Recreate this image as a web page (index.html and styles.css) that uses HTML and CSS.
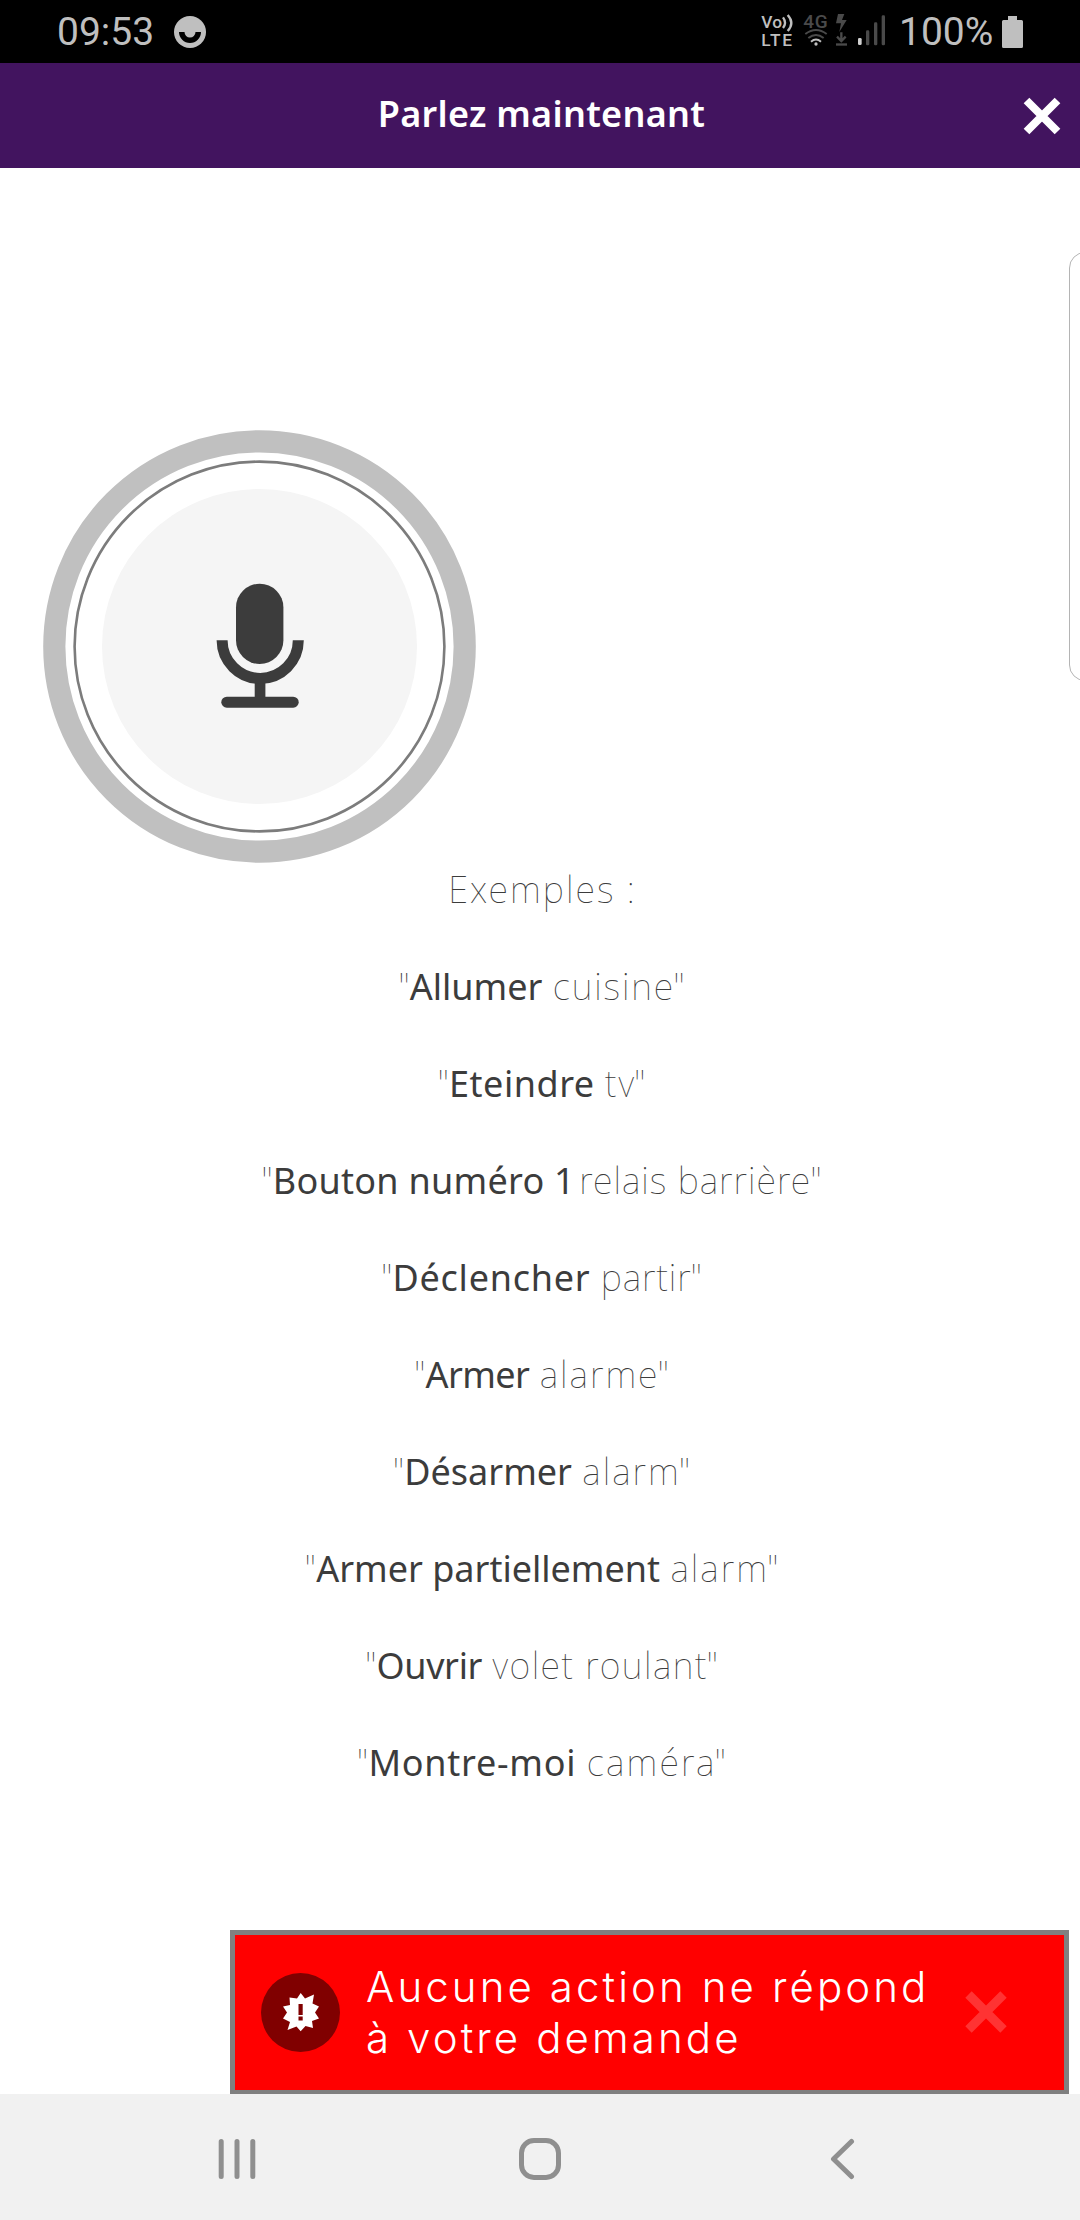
FILE: index.html
```html
<!DOCTYPE html>
<html lang="fr">
<head>
<meta charset="utf-8">
<title>Parlez maintenant</title>
<link rel="stylesheet" href="styles.css">
</head>
<body>
<div class="phone">
  <div class="status">
    <span class="clock">09:53</span>
    <svg class="smiley" viewBox="0 0 32 32">
      <circle cx="16" cy="16" r="16" fill="#bfbfbf"/>
      <path d="M5 16H10.5A5.5 5.5 0 0 0 21.500 16H27A11 11 0 0 1 5 16Z" fill="#000"/>
    </svg>
    <svg class="signals" viewBox="60 0 390 189">
      <g fill="#bfbfbf" font-family="Roboto, sans-serif" font-weight="500" font-size="52">
        <text x="64" y="84" textLength="62">Vo</text>
        <text x="64" y="138" textLength="92">LTE</text>
      </g>
      <g fill="none" stroke="#bfbfbf" stroke-width="7">
        <path d="M129 52Q141 68 129 84M143 45Q165 69 143 93"/>
      </g>
      <text x="190" y="84" textLength="73" fill="#4a4a4a" font-family="Roboto, sans-serif" font-weight="500" font-size="57">4G</text>
      <g fill="none" stroke-width="6">
        <path d="M196 102Q228 78 260 102M205 114Q228 96 251 114" stroke="#4a4a4a"/>
        <path d="M213 125Q228 112 243 125" stroke="#bfbfbf"/>
      </g>
      <circle cx="228" cy="132" r="5" fill="#bfbfbf"/>
      <g fill="#4a4a4a">
        <path d="M294 42H313L306 60H320L298 96L303 70H288Z"/>
        <rect x="288" y="130" width="33" height="7"/>
        <rect x="354" y="114" width="11" height="21" rx="4" fill="#d0d0d0"/>
        <rect x="378" y="91" width="10" height="45" rx="4"/>
        <rect x="402" y="67" width="10" height="69" rx="4"/>
        <rect x="425" y="46" width="10" height="90" rx="4"/>
      </g>
      <path d="M304 97V123M291 110L304 123L317 110" fill="none" stroke="#4a4a4a" stroke-width="7"/>
    </svg>
    <span class="percent">100%</span>
    <svg class="battery" viewBox="0 0 21 32">
      <path d="M6 0H15V4H19.500Q21 4 21 5.500V30.500Q21 32 19.500 32H1.500Q0 32 0 30.500V5.500Q0 4 1.500 4H6Z" fill="#bfbfbf"/>
    </svg>
  </div>

  <header class="header">
    <h1 class="title">Parlez maintenant</h1>
    <svg class="close" viewBox="0 0 38 38"><path d="M3.500 3.500L34.500 34.500M34.500 3.500L3.500 34.500" stroke="#fff" stroke-width="8"/></svg>
  </header>

  <main class="content">
    <svg class="mic" viewBox="43 430 433 433">
      <circle cx="259.500" cy="646.500" r="205.200" fill="#fff" stroke="#c0c0c0" stroke-width="22.200"/>
      <circle cx="259.500" cy="646.500" r="184.900" fill="none" stroke="#7c7c7c" stroke-width="2.600"/>
      <circle cx="259.500" cy="646.500" r="157.500" fill="#f5f5f5"/>
      <g fill="#3c3c3c">
        <rect x="236" y="583.700" width="47.400" height="80.300" rx="23.700"/>
        <rect x="254.700" y="680" width="10.700" height="20"/>
        <rect x="221.300" y="696.700" width="77.400" height="11" rx="5.500"/>
      </g>
      <path d="M222.100 640.300A38 38 0 0 0 298.300 640.300" fill="none" stroke="#3c3c3c" stroke-width="11"/>
    </svg>

    <div class="examples">
      <p class="row intro">Exemples :</p>
      <p class="row">"<b class="v1">Allumer</b> <span class="w1">cuisine</span>"</p>
      <p class="row">"<b class="v2">Eteindre</b> <span class="w2">tv</span>"</p>
      <p class="row">"<b class="v3">Bouton numéro 1</b> <span class="w3">relais barrière</span>"</p>
      <p class="row">"<b class="v4">Déclencher</b> <span class="w4">partir</span>"</p>
      <p class="row">"<b class="v5">Armer</b> <span class="w5">alarme</span>"</p>
      <p class="row">"<b class="v6">Désarmer</b> <span class="w6">alarm</span>"</p>
      <p class="row">"<b class="v7">Armer partiellement</b> <span class="w6">alarm</span>"</p>
      <p class="row">"<b class="v8">Ouvrir</b> <span class="w8">volet roulant</span>"</p>
      <p class="row">"<b class="v9">Montre-moi</b> <span class="w9">caméra</span>"</p>
    </div>

    <div class="toast">
      <svg class="alert" viewBox="0 0 79 79">
        <circle cx="39.500" cy="39.500" r="39.500" fill="#800000"/>
        <path d="M39.700 20L44 25.500L53 21.500L51.500 30.500L58 33.500L54 39.500L58 45.500L51 48L52 55L44.500 53L39.700 58.300L35.500 53.500L26.500 57L29 49L22 45.500L26 39.500L22 33.500L29 32L28.500 24.500L36 25.500Z" fill="#fff"/>
        <path d="M37.500 31H41.700V42H37.500ZM37.500 43.500H41.700V47.500H37.500Z" fill="#800000"/>
      </svg>
      <p class="message">Aucune action ne répond<br>à votre demande</p>
      <svg class="dismiss" viewBox="0 0 42 42"><path d="M3.500 3.500L38.500 38.500M38.500 3.500L3.500 38.500" stroke="#f33" stroke-width="9"/></svg>
    </div>
    <div class="drawer"></div>
  </main>

  <nav class="nav">
    <svg class="key" viewBox="0 0 42 42"><path d="M4.200 3.500V38.500M20 3.500V38.500M35.800 3.500V38.500"/></svg>
    <svg class="key" viewBox="0 0 42 42"><rect x="2.500" y="2.500" width="37" height="37" rx="12.500"/></svg>
    <svg class="key" viewBox="0 0 42 42"><path d="M30.500 3.500L12.500 21L30.500 38.500"/></svg>
  </nav>
</div>
</body>
</html>
```
FILE: styles.css
```css
* { box-sizing: border-box; }

body {
  margin: 0;
  background: #000;
  font-family: "Noto Sans", "Open Sans", sans-serif;
}

.phone {
  display: flex;
  flex-direction: column;
  width: 1080px;
  height: 2220px;
  overflow: hidden;
  background: #fff;
}

/* Status bar */
.status {
  display: flex;
  align-items: center;
  height: 63px;
  padding: 0 57px;
  background: #000;
  color: #bfbfbf;
  font-family: Roboto, sans-serif;
  font-size: 39px;
  line-height: 63px;
}
.clock { width: 117px; padding-top: 2px; }
.smiley { width: 32px; height: 32px; }
.signals { width: 130px; height: 63px; margin-left: auto; }
.percent { width: 103px; margin-left: 9px; padding-top: 2px; }
.battery { width: 21px; height: 32px; }

/* Title bar */
.header {
  display: grid;
  grid-template-columns: 62px 1fr 62px;
  align-items: center;
  height: 105px;
  background: #42145f;
}
.title {
  grid-column: 2;
  margin: 0 0 5px 3px;
  color: #fff;
  font-size: 36px;
  font-weight: 600;
  letter-spacing: 0.28px;
  text-align: center;
}
.close { width: 38px; height: 38px; margin-left: 5px; }

/* Voice panel */
.content {
  position: relative;
  flex: 1;
  display: flex;
  flex-direction: column;
  padding-top: 262px;
}
.mic { flex: none; width: 433px; height: 433px; margin-left: 43px; }

.examples {
  display: flex;
  flex-direction: column;
  gap: 43px;
  padding-left: 3px;
  color: #3c3c3c;
  font-size: 36px;
  font-weight: 100;
  line-height: 54px;
  text-align: center;
}
.row { margin: 0; white-space: nowrap; word-spacing: 1px; }
.row b { font-weight: 450; word-spacing: 0; }
.row span { word-spacing: 0; }
.intro { padding-left: 2px; letter-spacing: 2.06px; word-spacing: 0; }
.v2 { letter-spacing: 0.52px; }
.v3 { letter-spacing: 0.26px; margin-right: -6px; }
.v4 { letter-spacing: 0.76px; }
.v5 { letter-spacing: -0.58px; }
.v8 { letter-spacing: -0.36px; }
.v9 { letter-spacing: 0.75px; }
.w1 { letter-spacing: 1.9px; margin-right: -2px; }
.w2 { letter-spacing: 2px; margin-right: -2px; }
.w3 { letter-spacing: 1px; margin-right: -1px; }
.w4 { letter-spacing: 0.9px; margin-right: -1px; }
.w5 { letter-spacing: 2px; margin-right: -2px; }
.w6 { letter-spacing: 2px; margin-right: -2px; }
.w8 { letter-spacing: 1.5px; margin-right: -1.5px; }
.w9 { letter-spacing: 2.2px; margin-right: -2px; }

/* Error toast */
.toast {
  display: flex;
  align-items: center;
  width: 839px;
  height: 164px;
  margin: auto 0 0 230px;
  padding-left: 26px;
  background: #f00;
  border: solid #808080;
  border-width: 5px 5px 4px;
}
.alert { flex: none; width: 79px; height: 79px; }
.message {
  flex: none;
  width: 599px;
  margin: 0 0 2px 26px;
  color: #fff;
  font-family: Inter, "Noto Sans", sans-serif;
  font-size: 42px;
  font-weight: 300;
  line-height: 51px;
  letter-spacing: 3.1px;
  white-space: nowrap;
}
.dismiss { flex: none; width: 42px; height: 42px; margin-top: -1px; }

/* Edge panel peeking in from the right */
.drawer {
  position: absolute;
  top: 84px;
  right: -30px;
  width: 41px;
  height: 429px;
  border: 1px solid #b4b4b4;
  border-radius: 16px;
  background: #fff;
}

/* Navigation keys */
.nav {
  display: flex;
  justify-content: center;
  align-items: center;
  gap: 260px;
  height: 126px;
  padding-top: 4px;
  background: #f1f1f1;
}
.key {
  width: 42px;
  height: 42px;
  fill: none;
  stroke: #8f8f8f;
  stroke-width: 5;
  stroke-linecap: round;
  stroke-linejoin: round;
}
```
